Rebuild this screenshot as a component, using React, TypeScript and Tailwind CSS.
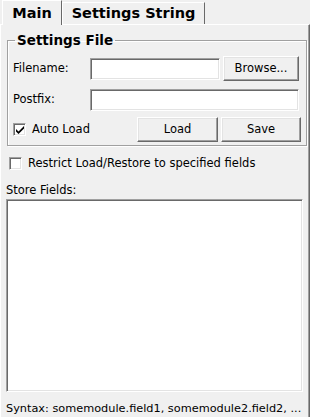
import React from "react";

const sunken =
  "bg-white border border-t-[#a0a0a0] border-l-[#a0a0a0] border-r-white border-b-white shadow-[inset_1px_1px_0_#696969,inset_-1px_-1px_0_#e3e3e3]";
const raised =
  "bg-[#f0f0f0] border border-t-white border-l-white border-r-[#696969] border-b-[#696969] shadow-[inset_-1px_-1px_0_#a0a0a0,inset_1px_1px_0_#e3e3e3] flex items-center justify-center text-black";

function Checkbox({ checked }: { checked?: boolean }) {
  return (
    <span className={`${sunken} w-[13px] h-[13px] flex items-center justify-center shrink-0`}>
      {checked && (
        <svg width="8" height="8" viewBox="0 0 8 8">
          <path d="M0 3 L0 5.5 L2.5 8 L8 2.5 L8 0 L2.5 5.5 Z" fill="#000" />
        </svg>
      )}
    </span>
  );
}

export default function App() {
  return (
    <div className="w-[310px] h-[417px] bg-[#f0f0f0] text-[11.5px] text-black font-['DejaVu_Sans',sans-serif] flex flex-col overflow-hidden">
      <div className="h-[25px] flex items-end pl-[2px] relative z-10">
        <div className="h-[25px] w-[60px] border border-b-0 border-t-white border-l-white border-r-[#696969] bg-[#f0f0f0] flex items-center justify-center text-[14.5px] font-bold -mb-[1px] pt-[2px]">
          Main
        </div>
        <div className="h-[22px] w-[143px] border border-b-0 border-t-white border-l-white border-r-[#696969] bg-[#f0f0f0] flex items-center justify-center text-[14.5px] font-bold pt-[1px]">
          Settings String
        </div>
      </div>
      <div className="flex-1 border border-t-white border-l-white border-r-[#696969] border-b-[#696969] shadow-[inset_-1px_-1px_0_#a0a0a0] flex flex-col pl-[5px] pr-[6px] pb-[3px]">
        <fieldset className="ml-[1px] mr-0 mt-[7px] border border-[#a0a0a0] shadow-[inset_1px_1px_0_white,1px_1px_0_white] h-[114px] px-[5px] pb-[4px]">
          <legend className="text-[13.5px] font-bold px-[2px] ml-[2px] leading-[16px]">Settings File</legend>
          <div className="flex items-center mt-[8px]">
            <span className="w-[77px]">Filename:</span>
            <div className={`${sunken} w-[130px] h-[22px]`} />
            <div className={`${raised} w-[76px] h-[25px] ml-[3px]`}>Browse...</div>
          </div>
          <div className="flex items-center mt-[8px]">
            <span className="w-[77px]">Postfix:</span>
            <div className={`${sunken} w-[209px] h-[22px]`} />
          </div>
          <div className="flex items-center mt-[6px]">
            <Checkbox checked />
            <span className="ml-[6px] w-[105px]">Auto Load</span>
            <div className={`${raised} w-[81px] h-[25px]`}>Load</div>
            <div className={`${raised} w-[80px] h-[25px] ml-[3px]`}>Save</div>
          </div>
        </fieldset>
        <div className="flex items-center mt-[9px] ml-[3px]">
          <Checkbox />
          <span className="ml-[6px]">Restrict Load/Restore to specified fields</span>
        </div>
        <div className="mt-[11px] leading-[14px]">Store Fields:</div>
        <div className={`${sunken} mt-[2px] h-[193px]`} />
        <div className="mt-[10px] leading-[14px] whitespace-nowrap text-[11.3px]">Syntax: somemodule.field1, somemodule2.field2, ...</div>
      </div>
    </div>
  );
}
